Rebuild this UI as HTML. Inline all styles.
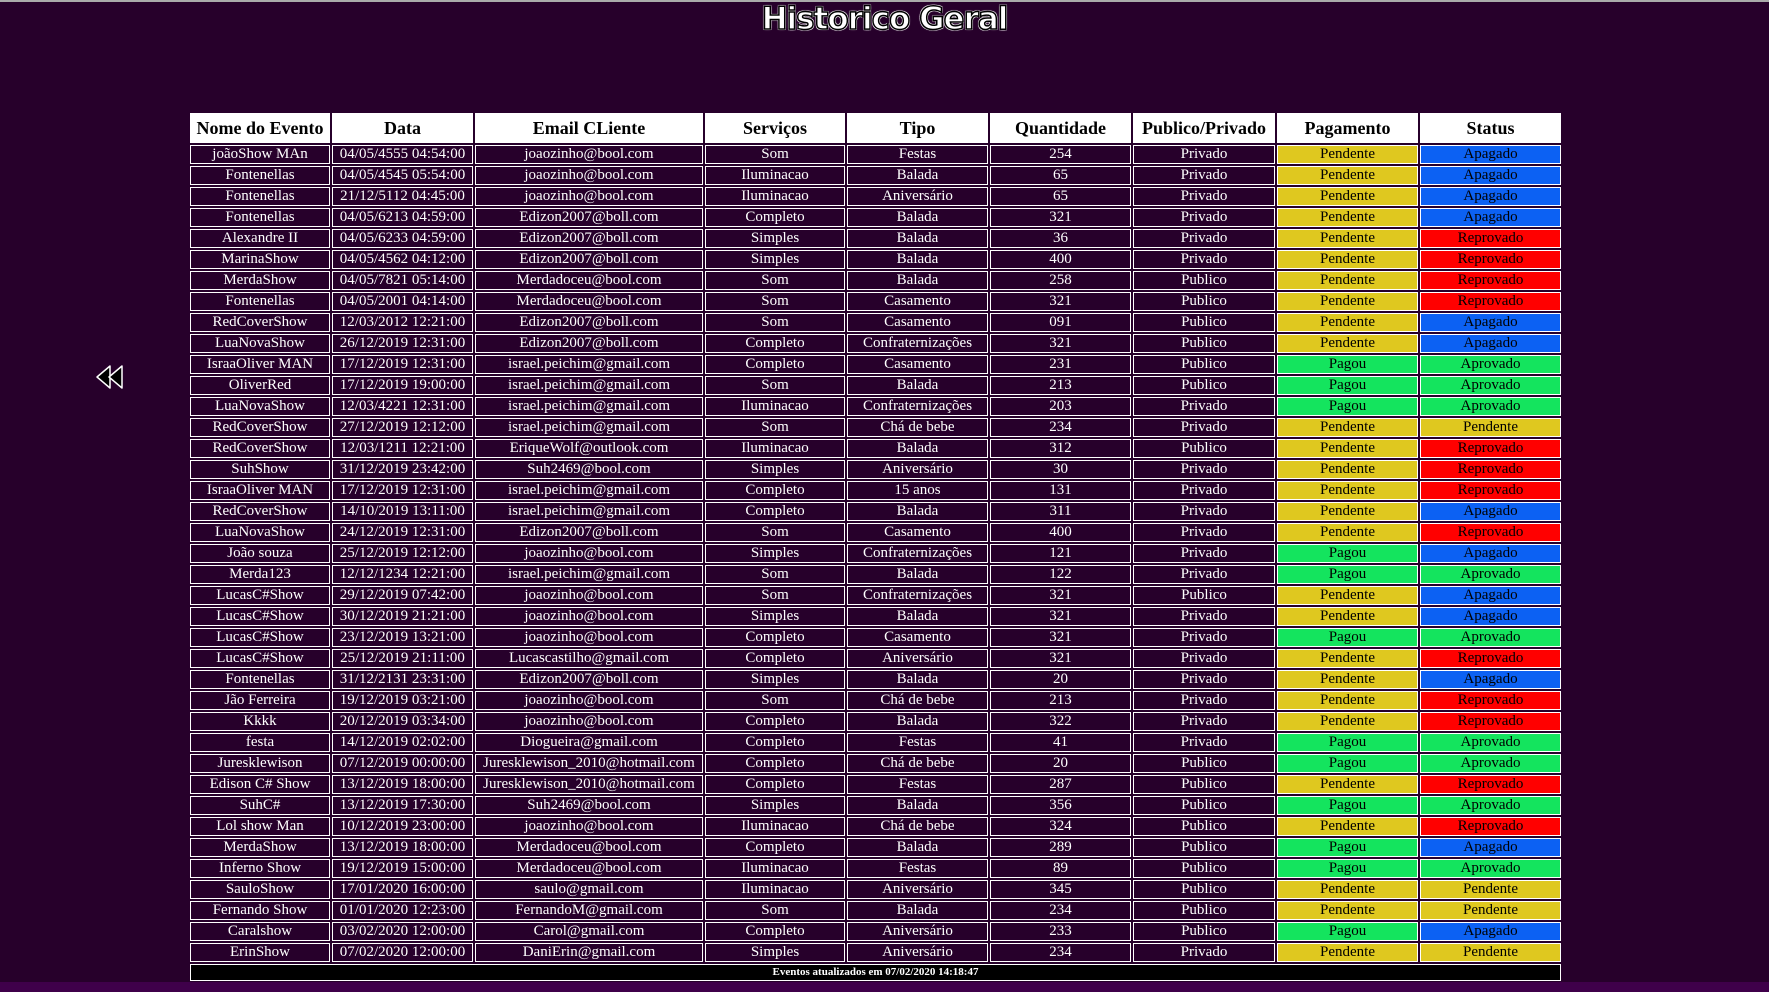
<!DOCTYPE html>
<html><head><meta charset="utf-8"><style>
html,body{margin:0;padding:0;}
body{width:1769px;height:992px;background:#27002b;position:relative;overflow:hidden;font-family:"Liberation Serif",serif;}
.top{position:absolute;left:0;top:0;width:1769px;height:2px;background:#aaa;}
h1{position:absolute;left:0;width:1769px;top:1px;margin:0;text-align:center;font-family:"Comic Sans MS","DejaVu Sans",sans-serif;font-weight:bold;font-size:31px;color:#fff;letter-spacing:-1px;-webkit-text-stroke:1.5px #000;text-shadow:0 0 2px #fff,1px 1px 0 #fff,-1px -1px 0 #fff,1px -1px 0 #fff,-1px 1px 0 #fff;}
table{position:absolute;left:188px;top:111px;width:1375px;border-collapse:separate;border-spacing:2px;table-layout:fixed;}
td,th{border:1px solid #fff;color:#fff;text-align:center;font-size:15px;height:17px;padding:0;line-height:17px;white-space:nowrap;overflow:hidden;text-overflow:clip;}
th{background:#fff;color:#000;font-size:18px;height:28px;line-height:28px;}
td.y{background:#dfc81f;color:#000}
td.b{background:#0c61f3;color:#000}
td.r{background:#ff0000;color:#000}
td.g{background:#14e45e;color:#000}
td.f{background:#000;font-size:11px;font-weight:bold;height:15px;line-height:15px;}
.strip{position:absolute;left:0;top:982px;width:1769px;height:10px;background:#3f004a;}
.back{position:absolute;left:94px;top:362px;}
</style></head><body>
<div class="top"></div>
<h1>Historico Geral</h1>
<svg class="back" width="36" height="30" viewBox="0 0 36 30"><g fill="#000" stroke="#fff" stroke-width="1.5" stroke-linejoin="round"><path d="M3 15 L16 4 L16 26 Z"/><path d="M15 15 L28 4 L28 26 Z"/></g></svg>
<table>
<colgroup><col style="width:140px"><col style="width:141px"><col style="width:228px"><col style="width:140px"><col style="width:141px"><col style="width:141px"><col style="width:142px"><col style="width:141px"><col style="width:141px"></colgroup>
<tr><th>Nome do Evento</th><th>Data</th><th>Email CLiente</th><th>Serviços</th><th>Tipo</th><th>Quantidade</th><th>Publico/Privado</th><th>Pagamento</th><th>Status</th></tr>
<tr><td>joãoShow MAn</td><td>04/05/4555 04:54:00</td><td>joaozinho@bool.com</td><td>Som</td><td>Festas</td><td>254</td><td>Privado</td><td class="y">Pendente</td><td class="b">Apagado</td></tr>
<tr><td>Fontenellas</td><td>04/05/4545 05:54:00</td><td>joaozinho@bool.com</td><td>Iluminacao</td><td>Balada</td><td>65</td><td>Privado</td><td class="y">Pendente</td><td class="b">Apagado</td></tr>
<tr><td>Fontenellas</td><td>21/12/5112 04:45:00</td><td>joaozinho@bool.com</td><td>Iluminacao</td><td>Aniversário</td><td>65</td><td>Privado</td><td class="y">Pendente</td><td class="b">Apagado</td></tr>
<tr><td>Fontenellas</td><td>04/05/6213 04:59:00</td><td>Edizon2007@boll.com</td><td>Completo</td><td>Balada</td><td>321</td><td>Privado</td><td class="y">Pendente</td><td class="b">Apagado</td></tr>
<tr><td>Alexandre II</td><td>04/05/6233 04:59:00</td><td>Edizon2007@boll.com</td><td>Simples</td><td>Balada</td><td>36</td><td>Privado</td><td class="y">Pendente</td><td class="r">Reprovado</td></tr>
<tr><td>MarinaShow</td><td>04/05/4562 04:12:00</td><td>Edizon2007@boll.com</td><td>Simples</td><td>Balada</td><td>400</td><td>Privado</td><td class="y">Pendente</td><td class="r">Reprovado</td></tr>
<tr><td>MerdaShow</td><td>04/05/7821 05:14:00</td><td>Merdadoceu@bool.com</td><td>Som</td><td>Balada</td><td>258</td><td>Publico</td><td class="y">Pendente</td><td class="r">Reprovado</td></tr>
<tr><td>Fontenellas</td><td>04/05/2001 04:14:00</td><td>Merdadoceu@bool.com</td><td>Som</td><td>Casamento</td><td>321</td><td>Publico</td><td class="y">Pendente</td><td class="r">Reprovado</td></tr>
<tr><td>RedCoverShow</td><td>12/03/2012 12:21:00</td><td>Edizon2007@boll.com</td><td>Som</td><td>Casamento</td><td>091</td><td>Publico</td><td class="y">Pendente</td><td class="b">Apagado</td></tr>
<tr><td>LuaNovaShow</td><td>26/12/2019 12:31:00</td><td>Edizon2007@boll.com</td><td>Completo</td><td>Confraternizações</td><td>321</td><td>Publico</td><td class="y">Pendente</td><td class="b">Apagado</td></tr>
<tr><td>IsraaOliver MAN</td><td>17/12/2019 12:31:00</td><td>israel.peichim@gmail.com</td><td>Completo</td><td>Casamento</td><td>231</td><td>Publico</td><td class="g">Pagou</td><td class="g">Aprovado</td></tr>
<tr><td>OliverRed</td><td>17/12/2019 19:00:00</td><td>israel.peichim@gmail.com</td><td>Som</td><td>Balada</td><td>213</td><td>Publico</td><td class="g">Pagou</td><td class="g">Aprovado</td></tr>
<tr><td>LuaNovaShow</td><td>12/03/4221 12:31:00</td><td>israel.peichim@gmail.com</td><td>Iluminacao</td><td>Confraternizações</td><td>203</td><td>Privado</td><td class="g">Pagou</td><td class="g">Aprovado</td></tr>
<tr><td>RedCoverShow</td><td>27/12/2019 12:12:00</td><td>israel.peichim@gmail.com</td><td>Som</td><td>Chá de bebe</td><td>234</td><td>Privado</td><td class="y">Pendente</td><td class="y">Pendente</td></tr>
<tr><td>RedCoverShow</td><td>12/03/1211 12:21:00</td><td>EriqueWolf@outlook.com</td><td>Iluminacao</td><td>Balada</td><td>312</td><td>Publico</td><td class="y">Pendente</td><td class="r">Reprovado</td></tr>
<tr><td>SuhShow</td><td>31/12/2019 23:42:00</td><td>Suh2469@bool.com</td><td>Simples</td><td>Aniversário</td><td>30</td><td>Privado</td><td class="y">Pendente</td><td class="r">Reprovado</td></tr>
<tr><td>IsraaOliver MAN</td><td>17/12/2019 12:31:00</td><td>israel.peichim@gmail.com</td><td>Completo</td><td>15 anos</td><td>131</td><td>Privado</td><td class="y">Pendente</td><td class="r">Reprovado</td></tr>
<tr><td>RedCoverShow</td><td>14/10/2019 13:11:00</td><td>israel.peichim@gmail.com</td><td>Completo</td><td>Balada</td><td>311</td><td>Privado</td><td class="y">Pendente</td><td class="b">Apagado</td></tr>
<tr><td>LuaNovaShow</td><td>24/12/2019 12:31:00</td><td>Edizon2007@boll.com</td><td>Som</td><td>Casamento</td><td>400</td><td>Privado</td><td class="y">Pendente</td><td class="r">Reprovado</td></tr>
<tr><td>João souza</td><td>25/12/2019 12:12:00</td><td>joaozinho@bool.com</td><td>Simples</td><td>Confraternizações</td><td>121</td><td>Privado</td><td class="g">Pagou</td><td class="b">Apagado</td></tr>
<tr><td>Merda123</td><td>12/12/1234 12:21:00</td><td>israel.peichim@gmail.com</td><td>Som</td><td>Balada</td><td>122</td><td>Privado</td><td class="g">Pagou</td><td class="g">Aprovado</td></tr>
<tr><td>LucasC#Show</td><td>29/12/2019 07:42:00</td><td>joaozinho@bool.com</td><td>Som</td><td>Confraternizações</td><td>321</td><td>Publico</td><td class="y">Pendente</td><td class="b">Apagado</td></tr>
<tr><td>LucasC#Show</td><td>30/12/2019 21:21:00</td><td>joaozinho@bool.com</td><td>Simples</td><td>Balada</td><td>321</td><td>Privado</td><td class="y">Pendente</td><td class="b">Apagado</td></tr>
<tr><td>LucasC#Show</td><td>23/12/2019 13:21:00</td><td>joaozinho@bool.com</td><td>Completo</td><td>Casamento</td><td>321</td><td>Privado</td><td class="g">Pagou</td><td class="g">Aprovado</td></tr>
<tr><td>LucasC#Show</td><td>25/12/2019 21:11:00</td><td>Lucascastilho@gmail.com</td><td>Completo</td><td>Aniversário</td><td>321</td><td>Privado</td><td class="y">Pendente</td><td class="r">Reprovado</td></tr>
<tr><td>Fontenellas</td><td>31/12/2131 23:31:00</td><td>Edizon2007@boll.com</td><td>Simples</td><td>Balada</td><td>20</td><td>Privado</td><td class="y">Pendente</td><td class="b">Apagado</td></tr>
<tr><td>Jão Ferreira</td><td>19/12/2019 03:21:00</td><td>joaozinho@bool.com</td><td>Som</td><td>Chá de bebe</td><td>213</td><td>Privado</td><td class="y">Pendente</td><td class="r">Reprovado</td></tr>
<tr><td>Kkkk</td><td>20/12/2019 03:34:00</td><td>joaozinho@bool.com</td><td>Completo</td><td>Balada</td><td>322</td><td>Privado</td><td class="y">Pendente</td><td class="r">Reprovado</td></tr>
<tr><td>festa</td><td>14/12/2019 02:02:00</td><td>Diogueira@gmail.com</td><td>Completo</td><td>Festas</td><td>41</td><td>Privado</td><td class="g">Pagou</td><td class="g">Aprovado</td></tr>
<tr><td>Juresklewison</td><td>07/12/2019 00:00:00</td><td>Juresklewison_2010@hotmail.com</td><td>Completo</td><td>Chá de bebe</td><td>20</td><td>Publico</td><td class="g">Pagou</td><td class="g">Aprovado</td></tr>
<tr><td>Edison C# Show</td><td>13/12/2019 18:00:00</td><td>Juresklewison_2010@hotmail.com</td><td>Completo</td><td>Festas</td><td>287</td><td>Publico</td><td class="y">Pendente</td><td class="r">Reprovado</td></tr>
<tr><td>SuhC#</td><td>13/12/2019 17:30:00</td><td>Suh2469@bool.com</td><td>Simples</td><td>Balada</td><td>356</td><td>Publico</td><td class="g">Pagou</td><td class="g">Aprovado</td></tr>
<tr><td>Lol show Man</td><td>10/12/2019 23:00:00</td><td>joaozinho@bool.com</td><td>Iluminacao</td><td>Chá de bebe</td><td>324</td><td>Publico</td><td class="y">Pendente</td><td class="r">Reprovado</td></tr>
<tr><td>MerdaShow</td><td>13/12/2019 18:00:00</td><td>Merdadoceu@bool.com</td><td>Completo</td><td>Balada</td><td>289</td><td>Publico</td><td class="g">Pagou</td><td class="b">Apagado</td></tr>
<tr><td>Inferno Show</td><td>19/12/2019 15:00:00</td><td>Merdadoceu@bool.com</td><td>Iluminacao</td><td>Festas</td><td>89</td><td>Publico</td><td class="g">Pagou</td><td class="g">Aprovado</td></tr>
<tr><td>SauloShow</td><td>17/01/2020 16:00:00</td><td>saulo@gmail.com</td><td>Iluminacao</td><td>Aniversário</td><td>345</td><td>Publico</td><td class="y">Pendente</td><td class="y">Pendente</td></tr>
<tr><td>Fernando Show</td><td>01/01/2020 12:23:00</td><td>FernandoM@gmail.com</td><td>Som</td><td>Balada</td><td>234</td><td>Publico</td><td class="y">Pendente</td><td class="y">Pendente</td></tr>
<tr><td>Caralshow</td><td>03/02/2020 12:00:00</td><td>Carol@gmail.com</td><td>Completo</td><td>Aniversário</td><td>233</td><td>Publico</td><td class="g">Pagou</td><td class="b">Apagado</td></tr>
<tr><td>ErinShow</td><td>07/02/2020 12:00:00</td><td>DaniErin@gmail.com</td><td>Simples</td><td>Aniversário</td><td>234</td><td>Privado</td><td class="y">Pendente</td><td class="y">Pendente</td></tr>
<tr><td class="f" colspan="9">Eventos atualizados em 07/02/2020 14:18:47</td></tr>
</table>
<div class="strip"></div>
</body></html>
